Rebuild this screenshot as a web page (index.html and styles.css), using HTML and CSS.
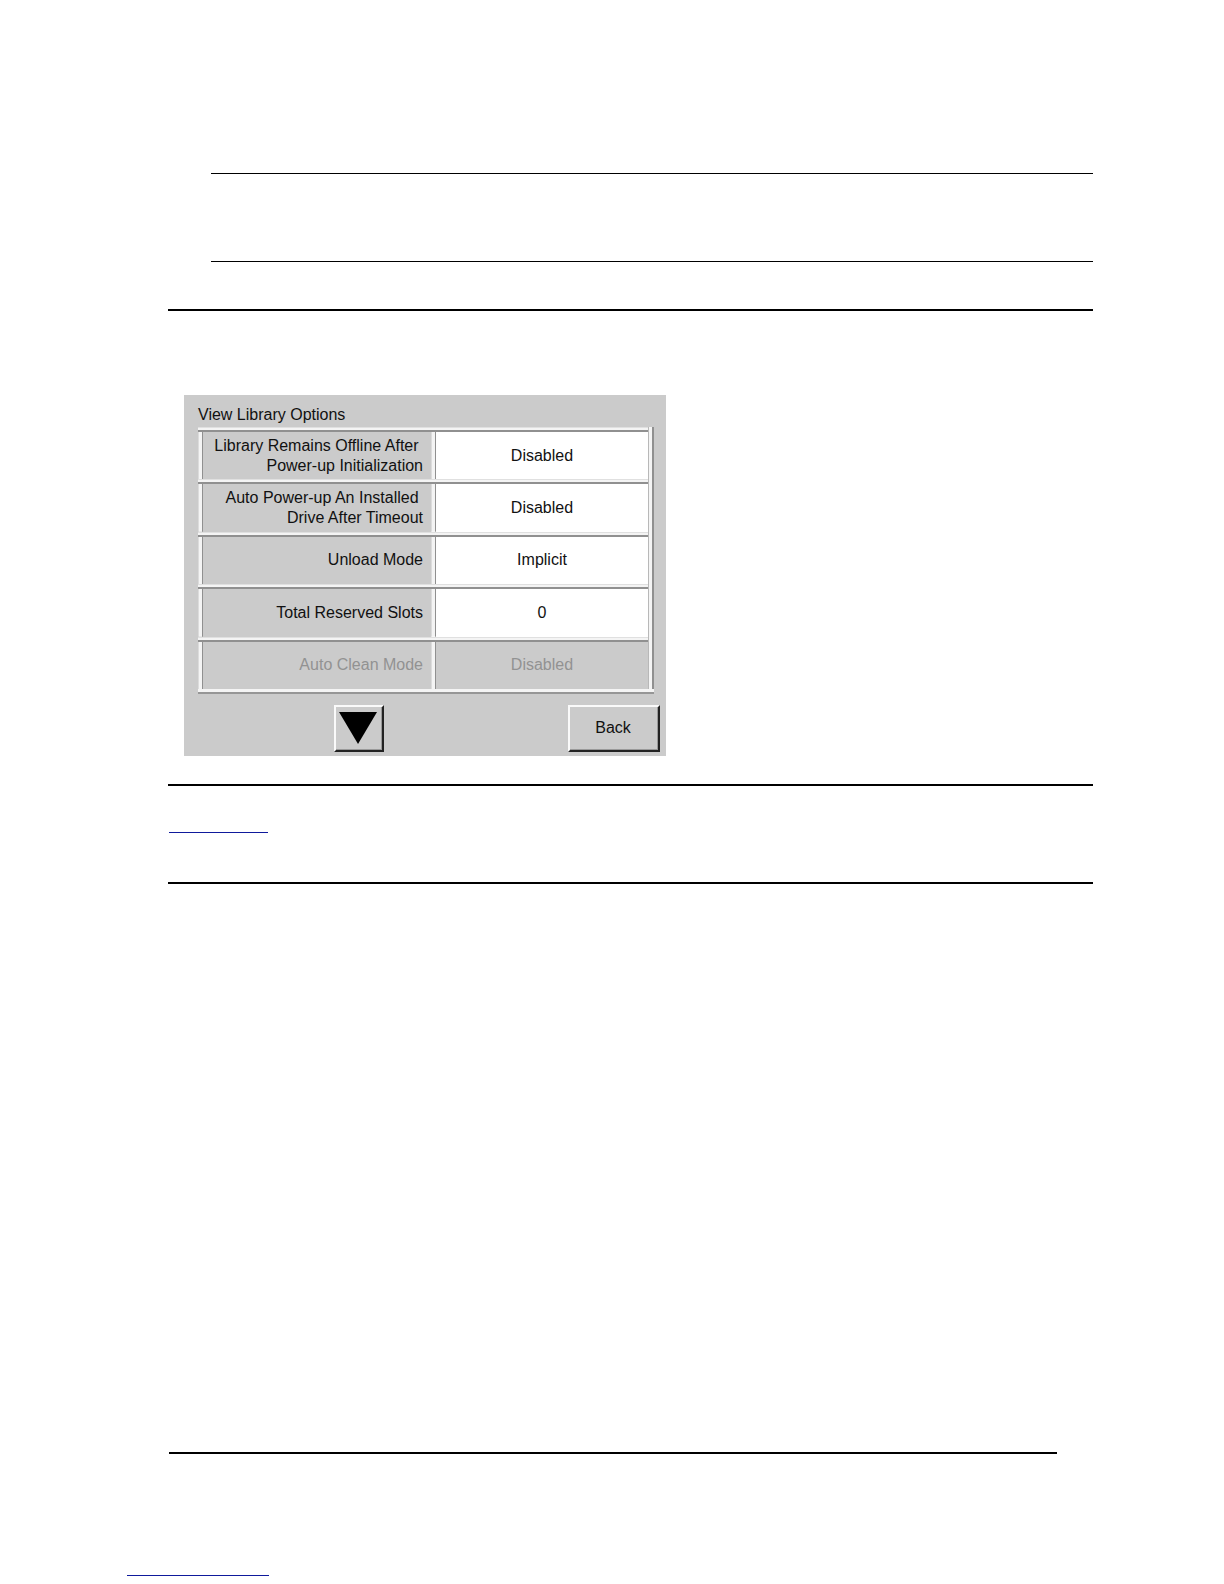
FILE: index.html
```html
<!DOCTYPE html>
<html lang="en">
<head>
<meta charset="utf-8">
<title>View Library Options</title>
<link rel="stylesheet" href="styles.css">
</head>
<body>
<main class="page">
  <section class="note"></section>
  <section class="figure">
    <div class="panel">
      <h1 class="title">View Library Options</h1>
      <div class="frame">
        <table class="options">
          <tbody>
            <tr><th scope="row">Library Remains Offline After&nbsp;<br>Power-up Initialization</th><td>Disabled</td></tr>
            <tr><th scope="row">Auto Power-up An Installed&nbsp;<br>Drive After Timeout</th><td>Disabled</td></tr>
            <tr><th scope="row">Unload Mode</th><td>Implicit</td></tr>
            <tr><th scope="row">Total Reserved Slots</th><td>0</td></tr>
            <tr class="off"><th scope="row">Auto Clean Mode</th><td>Disabled</td></tr>
          </tbody>
        </table>
      </div>
      <div class="actions">
        <button class="key down" type="button" aria-label="Next page"><svg width="38" height="32" viewBox="0 0 38 32"><path d="M0 0H38L19 32Z"/></svg></button>
        <button class="key back" type="button">Back</button>
      </div>
    </div>
  </section>
  <section class="reference"><a class="section-link" href="#section" aria-label="Section"></a></section>
  <footer class="footer"><a class="site-link" href="#site" aria-label="Website"></a></footer>
</main>
</body>
</html>
```
FILE: styles.css
```css
* { box-sizing: border-box; }

body {
  margin: 0;
  background: #fff;
  color: #111;
  font-family: "Liberation Sans", Arial, sans-serif;
  font-size: 16px;
  line-height: 20px;
}

.page {
  display: flex;
  flex-direction: column;
  min-height: 100vh;
  padding: 173px 131px 8px 168px;
}

.note {
  height: 89px;
  margin: 0 0 47px 43px;
  border-top: 1px solid #000;
  border-bottom: 1px solid #000;
}

.figure {
  padding: 84px 0 28px 16px;
  border-top: 2px solid #000;
}

.panel {
  width: 482px;
  max-width: 100%;
  padding: 10px 6px 4px 14px;
  background: #cbcbcb;
}

.title {
  margin: 0 0 2px;
  font-size: 16px;
  font-weight: 400;
}

/* Raised grid lines: a light edge followed by a dark one. */
.frame {
  margin-right: 6px;
  padding: 0 6px 5px 0;
  background:
    linear-gradient(#f4f4f4 3px, #969696 3px) bottom / 100% 5px no-repeat,
    linear-gradient(90deg, #b8b8b8 1px, #f4f4f4 1px, #f4f4f4 4px, #909090 4px) right / 6px 100% no-repeat;
}

.options {
  width: 100%;
  height: 262px;
  border-spacing: 0;
  table-layout: fixed;
}

.options tr { height: 52px; }

.options th,
.options td {
  padding: 5px 0 0;
  font-weight: 400;
  background:
    linear-gradient(#e0e0e0 1px, #f4f4f4 1px, #f4f4f4 3px, #909090 3px) top / 100% 5px no-repeat,
    linear-gradient(90deg, #dcdcdc 1px, #f4f4f4 1px, #f4f4f4 4px, #909090 4px) left / 5px 100% no-repeat;
}

.options th {
  width: 233px;
  padding-right: 8px;
  text-align: right;
}

.options td {
  padding-left: 5px;
  text-align: center;
  background-color: #fff;
}

.options .off th,
.options .off td {
  color: #929292;
  background-color: #cbcbcb;
}

.actions {
  display: flex;
  justify-content: space-between;
  margin-top: 11px;
  padding-left: 136px;
}

.key {
  display: flex;
  align-items: center;
  justify-content: center;
  height: 47px;
  padding: 0 2px 2px 0;
  border: 2px solid;
  border-color: #fafafa #222 #222 #fafafa;
  background: #cbcbcb;
  box-shadow: inset -1px -1px #999;
  color: #111;
  font: inherit;
}

.down { width: 50px; }
.back { width: 92px; }

.reference {
  height: 100px;
  padding: 46px 0 0 1px;
  border-top: 2px solid #000;
  border-bottom: 2px solid #000;
}

.section-link,
.site-link {
  display: block;
  height: 1px;
  background: #0f1a9c;
}

.section-link { width: 99px; }

.footer {
  margin: auto 36px 0 1px;
  padding-top: 121px;
  border-top: 2px solid #000;
}

.site-link {
  width: 142px;
  margin-left: -42px;
}
```
